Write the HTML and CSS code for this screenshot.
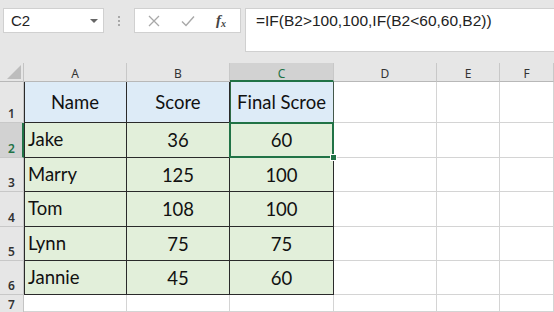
FILE: index.html
```html
<!DOCTYPE html>
<html>
<head>
<meta charset="utf-8">
<link rel="stylesheet" href="styles.css">
</head>
<body>
<div class="toolbar">
  <div class="namebox">
    <span class="name">C2</span>
    <span class="caret"></span>
  </div>
  <div class="sep"><span></span><span></span><span></span></div>
  <div class="fxbox">
    <svg class="ic" width="12" height="12" viewBox="0 0 12 12"><path d="M1 1 L11 11 M11 1 L1 11" stroke="#a8a8a8" stroke-width="1.3" fill="none"/></svg>
    <svg class="ic" width="14" height="12" viewBox="0 0 14 12"><path d="M1 6.5 L5 10.5 L13 1.5" stroke="#a8a8a8" stroke-width="1.4" fill="none"/></svg>
    <span class="fx"><i>f</i><sub>x</sub></span>
  </div>
  <div class="formula">=IF(B2&gt;100,100,IF(B2&lt;60,60,B2))</div>
</div>
<div class="sheet">
  <div class="corner"><span class="tri"></span></div>
  <div class="ch">A</div>
  <div class="ch">B</div>
  <div class="ch sel">C</div>
  <div class="ch">D</div>
  <div class="ch">E</div>
  <div class="ch">F</div>

  <div class="rh">1</div>
  <div class="c hd tA">Name</div>
  <div class="c hd tB">Score</div>
  <div class="c hd tC c1">Final Scroe</div>
  <div class="c"></div><div class="c"></div><div class="c"></div>

  <div class="rh sel">2</div>
  <div class="c dt tA">Jake</div>
  <div class="c dt tB">36</div>
  <div class="c dt tC active">60</div>
  <div class="c"></div><div class="c"></div><div class="c"></div>

  <div class="rh">3</div>
  <div class="c dt tA">Marry</div>
  <div class="c dt tB">125</div>
  <div class="c dt tC">100</div>
  <div class="c"></div><div class="c"></div><div class="c"></div>

  <div class="rh">4</div>
  <div class="c dt tA">Tom</div>
  <div class="c dt tB">108</div>
  <div class="c dt tC">100</div>
  <div class="c"></div><div class="c"></div><div class="c"></div>

  <div class="rh">5</div>
  <div class="c dt tA">Lynn</div>
  <div class="c dt tB">75</div>
  <div class="c dt tC">75</div>
  <div class="c"></div><div class="c"></div><div class="c"></div>

  <div class="rh">6</div>
  <div class="c dt tA">Jannie</div>
  <div class="c dt tB">45</div>
  <div class="c dt tC">60</div>
  <div class="c"></div><div class="c"></div><div class="c"></div>

  <div class="rh lastrow">7</div>
  <div class="c"></div><div class="c"></div><div class="c"></div><div class="c"></div><div class="c"></div><div class="c"></div>
</div>
</body>
</html>
```
FILE: styles.css
```css
html, body {
  margin: 0;
  padding: 0;
  width: 554px;
  height: 312px;
  overflow: hidden;
  background: #e6e6e6;
}
.toolbar {
  height: 63px;
  box-sizing: border-box;
  padding-top: 8px;
  display: flex;
  align-items: flex-start;
}
.namebox {
  margin-left: 3px;
  width: 101px;
  height: 25px;
  box-sizing: border-box;
  background: #fff;
  border: 1px solid #d0d0d0;
  display: flex;
  align-items: center;
  justify-content: space-between;
  padding: 0 5px 0 7px;
}
.name {
  font-family: "Liberation Sans", Arial, sans-serif;
  font-size: 15px;
  color: #222;
}
.caret {
  width: 0;
  height: 0;
  border-left: 4px solid transparent;
  border-right: 4px solid transparent;
  border-top: 4px solid #666;
}
.sep {
  width: 30px;
  height: 25px;
  display: flex;
  flex-direction: column;
  align-items: center;
  justify-content: center;
  gap: 2px;
}
.sep span {
  width: 2px;
  height: 2px;
  background: #a8a8a8;
}
.fxbox {
  width: 107px;
  height: 25px;
  box-sizing: border-box;
  background: #fff;
  border: 1px solid #d0d0d0;
  display: flex;
  align-items: center;
  padding-left: 13px;
}
.ic { display: block; }
.ic:first-child { margin-right: 21px; }
.fx {
  margin-left: 21px;
  font-family: "Liberation Serif", "Times New Roman", serif;
  color: #444;
  font-size: 15px;
  line-height: 1;
}
.fx i { font-weight: bold; }
.fx sub {
  font-size: 10px;
  font-style: italic;
  font-weight: bold;
  vertical-align: -2px;
}
.formula {
  flex: 1;
  margin-left: 4px;
  margin-right: -2px;
  height: 44px;
  box-sizing: border-box;
  background: #fff;
  border: 1px solid #d0d0d0;
  padding: 3px 0 0 10px;
  font-family: "Liberation Sans", Arial, sans-serif;
  font-size: 15.5px;
  color: #222;
  white-space: nowrap;
}
.sheet {
  display: grid;
  grid-template-columns: 24px 103px 103px 104px 103px 63px 1fr;
  grid-template-rows: 19px 41px 35px 34px 35px 34px 34px 17px;
  background: #fff;
}
.corner {
  background: #e6e6e6;
  border-right: 1px solid #c4c4c4;
  border-bottom: 1px solid #b8b8b8;
  position: relative;
}
.tri {
  position: absolute;
  right: 2px;
  bottom: 2px;
  width: 0;
  height: 0;
  border-left: 14px solid transparent;
  border-bottom: 14px solid #bdbdbd;
}
.ch {
  background: #e6e6e6;
  border-right: 1px solid #c8c8c8;
  border-bottom: 1px solid #b8b8b8;
  font-family: "Noto Sans", sans-serif;
  font-size: 12px;
  color: #333;
  display: flex;
  align-items: center;
  justify-content: center;
  box-sizing: border-box;
  padding-top: 2px;
}
.ch.sel {
  background: #d2d2d2;
  color: #217346;
  border-bottom: 2px solid #217346;
  padding-top: 3px;
}
.rh {
  background: #e6e6e6;
  border-right: 1px solid #c4c4c4;
  border-bottom: 1px solid #c8c8c8;
  font-family: "Noto Sans", sans-serif;
  font-size: 12px;
  font-weight: 600;
  color: #333;
  display: flex;
  align-items: flex-end;
  padding-left: 8px;
  padding-bottom: 0;
  box-sizing: border-box;
  line-height: 16px;
}
.rh.lastrow {
  border-bottom: none;
  align-items: center;
  line-height: 14px;
  padding-top: 2px;
}
.rh.sel {
  background: #d2d2d2;
  color: #217346;
  border-right: 2px solid #217346;
}
.c {
  border-right: 1px solid #d4d4d4;
  border-bottom: 1px solid #d4d4d4;
  box-sizing: border-box;
  font-family: Lato, "Noto Sans", sans-serif;
  font-size: 18.5px;
  color: #111;
  display: flex;
  align-items: center;
  justify-content: center;
}
.c.hd { background: #ddebf7; }
.c.dt { background: #e2efda; }
.c.tA, .c.tB, .c.tC {
  border-right: 1px solid #2a2a2a;
  border-bottom: 1px solid #2a2a2a;
}
.c.tA {
  justify-content: flex-start;
  padding-left: 4px;
  box-shadow: inset 1px 0 0 #2a2a2a;
}
.c.hd.tA { justify-content: center; padding-left: 0; }
.c.tA.dt { padding-bottom: 2px; }
.c.c1 {
  border-right-color: #44584a;
  box-shadow: inset 1px 0 0 #2f6b45;
}
.active {
  position: relative;
}
.active::after {
  content: "";
  position: absolute;
  left: -1px;
  top: -1px;
  right: -1px;
  bottom: -1px;
  border: 2px solid #217346;
}
.active::before {
  content: "";
  position: absolute;
  right: -4px;
  bottom: -4px;
  width: 5px;
  height: 5px;
  background: #217346;
  border: 1px solid #fff;
  z-index: 2;
}
```
